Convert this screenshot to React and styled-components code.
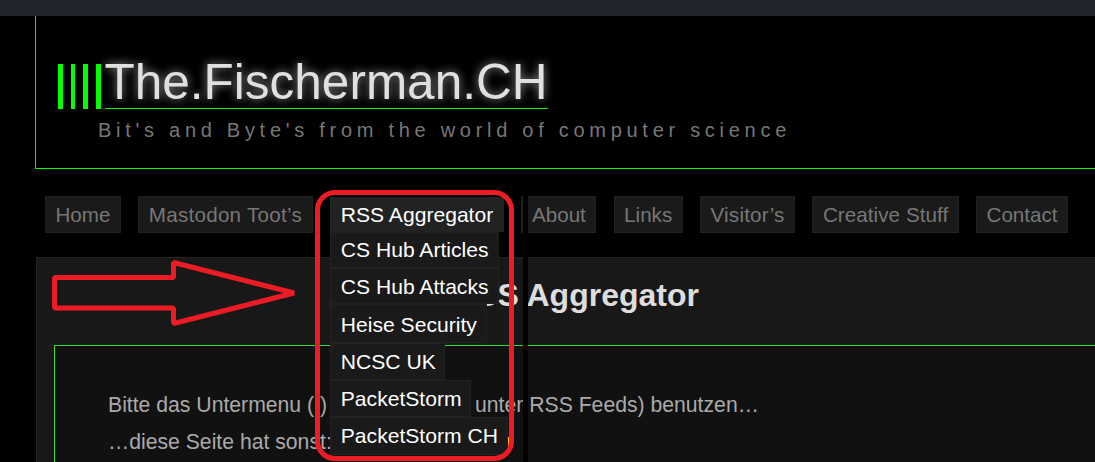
import React from 'react';
import styled, { createGlobalStyle } from 'styled-components';

const GlobalStyle = createGlobalStyle`
  html, body {
    margin: 0;
    padding: 0;
    background: #000;
  }
  body {
    font-family: "Liberation Sans", Arial, sans-serif;
  }
`;

const Page = styled.div`
  position: relative;
  width: 1095px;
  height: 462px;
  overflow: hidden;
  background: #000;
`;

const TopBar = styled.div`
  height: 16px;
  background: #20262b;
`;

const Header = styled.header`
  box-sizing: border-box;
  height: 153px;
  margin-left: 35px;
  padding: 40px 0 0 22px;
  border-left: 1px solid #0f0;
  border-bottom: 1px solid #0f0;
`;

const Brand = styled.div`
  display: flex;
  align-items: flex-end;
`;

const Bars = styled.div`
  display: flex;
  gap: 8.2px;
  margin-right: 4px;
  height: 45px;
`;

const Bar = styled.span`
  width: 4.5px;
  height: 100%;
  background: #0f0;
`;

const SiteTitle = styled.h1`
  margin: 0;
  padding-right: 1px;
  font-size: 49.5px;
  line-height: 52px;
  font-weight: 400;
  color: #e0e0e0;
  text-shadow: 0 0 10px #999;
  border-bottom: 1px solid #0f0;
`;

const Tagline = styled.div`
  margin: 9px 0 0 40px;
  font-size: 20px;
  line-height: 24px;
  letter-spacing: 4.72px;
  color: #777;
  white-space: nowrap;
`;

const Nav = styled.nav`
  display: flex;
  gap: 17.3px;
  margin: 27px 0 0 45px;
  height: 37px;
`;

const NavItem = styled.a`
  box-sizing: border-box;
  display: flex;
  align-items: center;
  height: 37px;
  padding: 0 9.5px;
  background: #1a1a1a;
  border: 1px solid #222;
  color: #777;
  font-size: 20.6px;
  letter-spacing: ${(p) => p.$spread || 0}px;
  white-space: nowrap;
`;

const MenuSlot = styled.div`
  position: relative;
  width: 174.4px;
`;

const Dropdown = styled.ul`
  position: absolute;
  top: 1px;
  left: 0;
  z-index: 2;
  margin: 0;
  padding: 0;
  list-style: none;
  display: flex;
  flex-direction: column;
  align-items: flex-start;
`;

const DropItem = styled.li`
  box-sizing: border-box;
  display: flex;
  align-items: center;
  width: ${(p) => p.$w}px;
  height: ${(p) => p.$h}px;
  padding: ${(p) => p.$top || 0}px 0 0 10px;
  background: ${(p) => (p.$active ? '#222' : '#1a1a1a')};
  border: 1px solid #222;
  color: #fff;
  font-size: 21.1px;
  white-space: nowrap;
`;

const Panel = styled.section`
  width: 1100px;
  height: 220px;
  margin: 24px 0 0 36px;
  padding-left: 17px;
  background: #181818;
  border: 1px solid #222;
`;

const PanelTitle = styled.h2`
  margin: 0;
  padding-left: 399px;
  height: 87px;
  font-size: 32px;
  line-height: 74px;
  font-weight: 700;
  color: #ddd;
`;

const ContentBox = styled.div`
  height: 140px;
  padding: 40px 0 0 53px;
  background: #111;
  border: 1px solid #3d3;
`;

const Line = styled.p`
  margin: 0;
  font-size: 21.2px;
  line-height: 37px;
  color: #aaa;
  white-space: nowrap;
`;

const Spacer = styled.span`
  display: inline-block;
  width: ${(p) => p.$w}px;
`;

const Smiley = styled.span`
  display: inline-block;
  width: 18px;
  height: 18px;
  border-radius: 50%;
  background: #f5b81f;
  vertical-align: -3px;
`;

/* black cut that runs through the nav and the panel in the screenshot */
const ImageCut = styled.div`
  position: absolute;
  z-index: 1;
  top: 190px;
  bottom: 0;
  left: 523px;
  width: 5px;
  background: #000;
`;

const Marker = styled.div`
  position: absolute;
  z-index: 3;
  left: 315px;
  top: 190px;
  box-sizing: border-box;
  width: 199px;
  height: 271px;
  border: 5.5px solid #ed1c24;
  border-radius: 20px;
`;

const Arrow = styled.svg`
  position: absolute;
  z-index: 3;
  left: 0;
  top: 0;
`;

const links = [
  { label: 'Home' },
  { label: 'Mastodon Toot’s', spread: 0.27 },
];

const moreLinks = [
  { label: 'About' },
  { label: 'Links' },
  { label: 'Visitor’s', spread: 0.22 },
  { label: 'Creative Stuff', spread: 0.07 },
  { label: 'Contact' },
];

const feeds = [
  { label: 'RSS Aggregator', w: 174, h: 35, active: true },
  { label: 'CS Hub Articles', w: 169, h: 36 },
  { label: 'CS Hub Attacks', w: 169, h: 36, top: 2 },
  { label: 'Heise Security', w: 157, h: 39, top: 3 },
  { label: 'NCSC UK', w: 115, h: 37 },
  { label: 'PacketStorm', w: 141, h: 37 },
  { label: 'PacketStorm CH', w: 178, h: 38 },
];

export default function App() {
  return (
    <Page>
      <GlobalStyle />
      <TopBar />
      <Header>
        <Brand>
          <Bars>
            <Bar />
            <Bar />
            <Bar />
            <Bar />
          </Bars>
          <SiteTitle>The.Fischerman.CH</SiteTitle>
        </Brand>
        <Tagline>Bit's and Byte's from the world of computer science</Tagline>
      </Header>
      <Nav>
        {links.map((l) => (
          <NavItem key={l.label} $spread={l.spread}>{l.label}</NavItem>
        ))}
        <MenuSlot>
          <Dropdown>
            {feeds.map((f) => (
              <DropItem key={f.label} $w={f.w} $h={f.h} $top={f.top} $active={f.active}>
                {f.label}
              </DropItem>
            ))}
          </Dropdown>
        </MenuSlot>
        {moreLinks.map((l) => (
          <NavItem key={l.label} $spread={l.spread}>{l.label}</NavItem>
        ))}
      </Nav>
      <Panel>
        <PanelTitle>RSS Aggregator</PanelTitle>
        <ContentBox>
          <Line>
            Bitte das Untermenu ( )<Spacer $w={148} />unter RSS Feeds) benutzen…
          </Line>
          <Line>
            …diese Seite hat sonst:<Spacer $w={161} /><Smiley />
          </Line>
        </ContentBox>
      </Panel>
      <ImageCut />
      <Arrow width="1095" height="462" viewBox="0 0 1095 462" fill="none">
        <polygon
          points="54.5,277.5 173.5,277.5 173.5,262.5 294,293 173.5,323.5 173.5,308 54.5,308"
          stroke="#ed1c24"
          strokeWidth="5"
          strokeLinejoin="bevel"
        />
      </Arrow>
      <Marker />
    </Page>
  );
}
